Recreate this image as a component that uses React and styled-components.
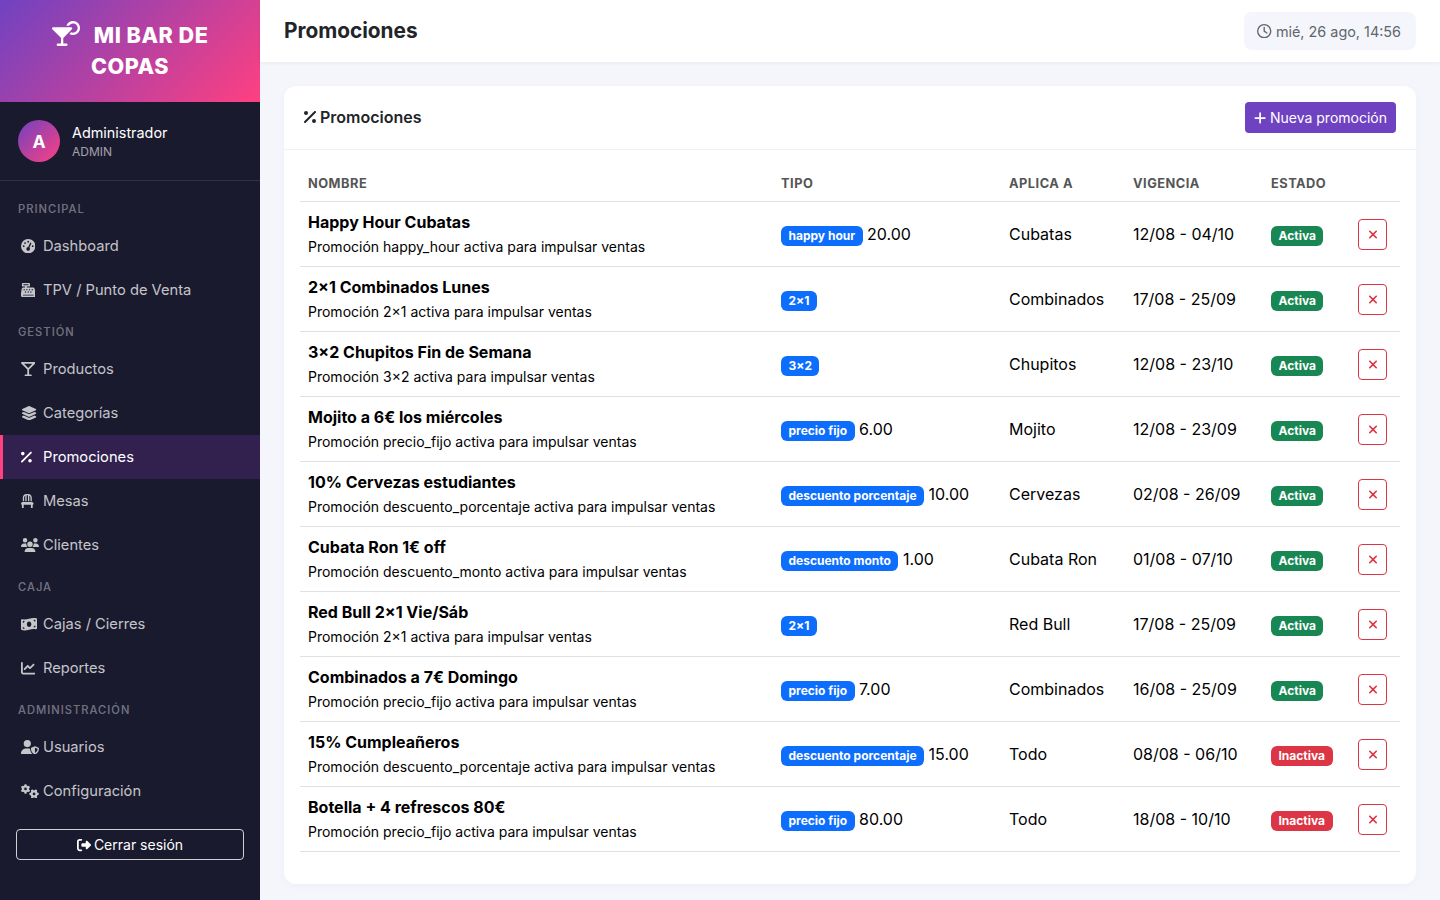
import styled, { createGlobalStyle } from 'styled-components'
import {
    FaMartiniGlassCitrus, FaGaugeHigh, FaCashRegister, FaMartiniGlassEmpty, FaLayerGroup, FaPercent, FaChair, FaUsers,
    FaMoneyBillWave, FaChartLine, FaUserShield, FaGears, FaRightFromBracket, FaRegClock, FaPlus, FaXmark
} from 'react-icons/fa6'

// ancho = proporción del viewBox del icono (ancho / 512)
const secciones = [
    { titulo: 'PRINCIPAL', items: [
        { nombre: 'Dashboard', Icono: FaGaugeHigh, ancho: 1 },
        { nombre: 'TPV / Punto de Venta', Icono: FaCashRegister, ancho: 1 },
    ] },
    { titulo: 'GESTIÓN', items: [
        { nombre: 'Productos', Icono: FaMartiniGlassEmpty, ancho: 1 },
        { nombre: 'Categorías', Icono: FaLayerGroup, ancho: 1.125 },
        { nombre: 'Promociones', Icono: FaPercent, ancho: 0.75, activo: true },
        { nombre: 'Mesas', Icono: FaChair, ancho: 0.875 },
        { nombre: 'Clientes', Icono: FaUsers, ancho: 1.25 },
    ] },
    { titulo: 'CAJA', items: [
        { nombre: 'Cajas / Cierres', Icono: FaMoneyBillWave, ancho: 1.125 },
        { nombre: 'Reportes', Icono: FaChartLine, ancho: 1 },
    ] },
    { titulo: 'ADMINISTRACIÓN', items: [
        { nombre: 'Usuarios', Icono: FaUserShield, ancho: 1.25 },
        { nombre: 'Configuración', Icono: FaGears, ancho: 1.25 },
    ] },
]

const promociones = [
    { nombre: 'Happy Hour Cubatas', desc: 'happy_hour', tipo: 'happy hour', valor: '20.00', aplica: 'Cubatas', vigencia: '12/08 - 04/10', activa: true },
    { nombre: '2×1 Combinados Lunes', desc: '2×1', tipo: '2×1', aplica: 'Combinados', vigencia: '17/08 - 25/09', activa: true },
    { nombre: '3×2 Chupitos Fin de Semana', desc: '3×2', tipo: '3×2', aplica: 'Chupitos', vigencia: '12/08 - 23/10', activa: true },
    { nombre: 'Mojito a 6€ los miércoles', desc: 'precio_fijo', tipo: 'precio fijo', valor: '6.00', aplica: 'Mojito', vigencia: '12/08 - 23/09', activa: true },
    { nombre: '10% Cervezas estudiantes', desc: 'descuento_porcentaje', tipo: 'descuento porcentaje', valor: '10.00', aplica: 'Cervezas', vigencia: '02/08 - 26/09', activa: true },
    { nombre: 'Cubata Ron 1€ off', desc: 'descuento_monto', tipo: 'descuento monto', valor: '1.00', aplica: 'Cubata Ron', vigencia: '01/08 - 07/10', activa: true },
    { nombre: 'Red Bull 2×1 Vie/Sáb', desc: '2×1', tipo: '2×1', aplica: 'Red Bull', vigencia: '17/08 - 25/09', activa: true },
    { nombre: 'Combinados a 7€ Domingo', desc: 'precio_fijo', tipo: 'precio fijo', valor: '7.00', aplica: 'Combinados', vigencia: '16/08 - 25/09', activa: true },
    { nombre: '15% Cumpleañeros', desc: 'descuento_porcentaje', tipo: 'descuento porcentaje', valor: '15.00', aplica: 'Todo', vigencia: '08/08 - 06/10', activa: false },
    { nombre: 'Botella + 4 refrescos 80€', desc: 'precio_fijo', tipo: 'precio fijo', valor: '80.00', aplica: 'Todo', vigencia: '18/08 - 10/10', activa: false },
]

export default function App() {
    return (
        <Pagina>
            <GlobalStyle />
            <Sidebar>
                <Marca>
                    <MarcaTitulo><FaMartiniGlassCitrus /> MI BAR DE COPAS</MarcaTitulo>
                </Marca>
                <Usuario>
                    <Avatar>A</Avatar>
                    <div>
                        <UsuarioNombre>Administrador</UsuarioNombre>
                        <UsuarioRol>ADMIN</UsuarioRol>
                    </div>
                </Usuario>
                <Nav>
                    {secciones.map((s) => (
                        <div key={s.titulo}>
                            <SeccionTitulo>{s.titulo}</SeccionTitulo>
                            {s.items.map(({ nombre, Icono, ancho, activo }) => (
                                <NavItem key={nombre} $activo={activo}>
                                    <NavIcono $ancho={ancho}><Icono /></NavIcono>
                                    {nombre}
                                </NavItem>
                            ))}
                        </div>
                    ))}
                </Nav>
                <CerrarSesion><FaRightFromBracket /> Cerrar sesión</CerrarSesion>
            </Sidebar>
            <Main>
                <Topbar>
                    <TituloPagina>Promociones</TituloPagina>
                    <Fecha><FaRegClock /> mié, 26 ago, 14:56</Fecha>
                </Topbar>
                <Contenido>
                    <Card>
                        <CardHeader>
                            <CardTitulo><FaPercent /> Promociones</CardTitulo>
                            <BotonNueva><FaPlus /> Nueva promoción</BotonNueva>
                        </CardHeader>
                        <CardBody>
                            <Tabla>
                                <thead>
                                    <tr>
                                        <Th $ancho={473}>Nombre</Th>
                                        <Th $ancho={228}>Tipo</Th>
                                        <Th $ancho={124}>Aplica a</Th>
                                        <Th $ancho={138}>Vigencia</Th>
                                        <Th $ancho={87}>Estado</Th>
                                        <Th $ancho={50}></Th>
                                    </tr>
                                </thead>
                                <tbody>
                                    {promociones.map((p) => (
                                        <tr key={p.nombre}>
                                            <Td>
                                                <PromoNombre>{p.nombre}</PromoNombre>
                                                <PromoDesc>Promoción {p.desc} activa para impulsar ventas</PromoDesc>
                                            </Td>
                                            <TdBajo><BadgeTipo>{p.tipo}</BadgeTipo>{p.valor && ` ${p.valor}`}</TdBajo>
                                            <Td>{p.aplica}</Td>
                                            <Td>{p.vigencia}</Td>
                                            <TdBajo><BadgeEstado $activa={p.activa}>{p.activa ? 'Activa' : 'Inactiva'}</BadgeEstado></TdBajo>
                                            <TdBajo><BotonBorrar><FaXmark /></BotonBorrar></TdBajo>
                                        </tr>
                                    ))}
                                </tbody>
                            </Tabla>
                        </CardBody>
                    </Card>
                </Contenido>
            </Main>
        </Pagina>
    )
}

const GlobalStyle = createGlobalStyle`
    * { box-sizing: border-box; }
    body {
        margin: 0;
        font-family: Inter, "Liberation Sans", sans-serif;
        color: #000;
        background: #f4f6fb;
    }
`;

const Pagina = styled.div`
    display: flex;
    height: 900px;
    overflow: hidden;
`;

const Sidebar = styled.aside`
    width: 260px;
    flex-shrink: 0;
    background: #1a1a2e;
    display: flex;
    flex-direction: column;
`;

const Marca = styled.div`
    height: 102px;
    padding: 20px;
    background: linear-gradient(135deg, #6f42c1, #ff4081);
    text-align: center;
`;

const MarcaTitulo = styled.div`
    color: #fff;
    font-size: 21.6px;
    font-weight: 800;
    line-height: 31px;
    letter-spacing: 0.5px;
    svg { width: 28px; height: 25px; vertical-align: -3px; margin-right: 9px; }
`;

const Usuario = styled.div`
    height: 79px;
    display: flex;
    align-items: center;
    gap: 12px;
    padding: 0 18px;
    border-bottom: 1px solid rgba(255, 255, 255, 0.1);
`;

const Avatar = styled.div`
    width: 42px;
    height: 42px;
    border-radius: 50%;
    background: linear-gradient(135deg, #6f42c1, #ff4081);
    display: flex;
    align-items: center;
    justify-content: center;
    color: #fff;
    font-size: 17.6px;
    font-weight: 700;
`;

const UsuarioNombre = styled.div`
    padding-top: 1px;
    color: #fff;
    font-size: 14.4px;
    font-weight: 400;
    line-height: 20px;
`;

const UsuarioRol = styled.div`
    color: rgba(255, 255, 255, 0.6);
    font-size: 12px;
    line-height: 18px;
`;

const Nav = styled.nav`
    padding-top: 8px;
`;

const SeccionTitulo = styled.div`
    padding: 11px 18px 6px;
    color: rgba(255, 255, 255, 0.4);
    font-size: 11.2px;
    font-weight: 500;
    line-height: 18px;
    letter-spacing: 1px;
`;

const NavItem = styled.div`
    height: 44px;
    display: flex;
    align-items: center;
    padding-left: ${({ $activo }) => $activo ? '18px' : '21px'};
    font-size: 14.7px;
    color: ${({ $activo }) => $activo ? '#fff' : 'rgba(255, 255, 255, 0.75)'};
    background: ${({ $activo }) => $activo ? '#32214f' : 'transparent'};
    border-left: ${({ $activo }) => $activo ? '3px solid #ff4081' : 'none'};
`;

const NavIcono = styled.span`
    width: 22px;
    display: flex;
    font-size: 14.4px;
    svg { width: ${({ $ancho }) => $ancho}em; height: 1em; }
`;

const CerrarSesion = styled.button`
    margin: 16px 16px 0;
    height: 31px;
    background: transparent;
    border: 1px solid rgba(255, 255, 255, 0.8);
    border-radius: 4px;
    color: #fff;
    font-family: inherit;
    font-size: 14px;
    display: flex;
    align-items: center;
    justify-content: center;
    gap: 3px;
`;

const Main = styled.main`
    flex: 1;
    min-width: 0;
    display: flex;
    flex-direction: column;
`;

const Topbar = styled.header`
    height: 62px;
    flex-shrink: 0;
    padding: 0 24px;
    background: #fff;
    display: flex;
    align-items: center;
    justify-content: space-between;
    box-shadow: 0 1px 4px rgba(0, 0, 0, 0.05);
`;

const TituloPagina = styled.h1`
    margin: 0 0 2px;
    font-size: 20.8px;
    font-weight: 700;
    color: #212529;
`;

const Fecha = styled.div`
    height: 38px;
    padding: 0 15px 0 13px;
    background: #f4f6fb;
    border-radius: 8px;
    display: flex;
    align-items: center;
    gap: 4px;
    color: #5f666d;
    font-size: 14.4px;
`;

const Contenido = styled.div`
    padding: 24px;
`;

const Card = styled.section`
    height: 798px;
    background: #fff;
    border-radius: 12px;
    box-shadow: 0 2px 8px rgba(0, 0, 0, 0.03);
`;

const CardHeader = styled.div`
    height: 64px;
    padding: 0 20px;
    display: flex;
    align-items: center;
    justify-content: space-between;
    border-bottom: 1px solid #eef0f3;
`;

const CardTitulo = styled.div`
    display: flex;
    align-items: center;
    gap: 4px;
    margin-bottom: 2px;
    font-size: 16px;
    font-weight: 600;
    color: #212529;
    svg { width: 12px; height: 16px; }
`;

const BotonNueva = styled.button`
    height: 31px;
    padding: 0 9px;
    background: #6f42c1;
    border: none;
    border-radius: 4px;
    color: #fff;
    font-family: inherit;
    font-size: 14px;
    display: flex;
    align-items: center;
    gap: 4px;
    svg { width: 12.25px; height: 14px; }
`;

const CardBody = styled.div`
    padding: 16px;
`;

const Tabla = styled.table`
    width: 1100px;
    table-layout: fixed;
    border-collapse: collapse;
`;

const Th = styled.th`
    width: ${({ $ancho }) => $ancho}px;
    height: 35px;
    padding: 0 8px;
    text-align: left;
    font-size: 12.8px;
    font-weight: 700;
    letter-spacing: 0.5px;
    text-transform: uppercase;
    color: #555;
    border-bottom: 1px solid #dee2e6;
`;

const Td = styled.td`
    height: 65px;
    padding: 0 8px;
    font-size: 16px;
    color: #000;
    vertical-align: middle;
    border-bottom: 1px solid #dee2e6;
    white-space: nowrap;
`;

const TdBajo = styled(Td)`
    padding-top: 2px;
`;

const PromoNombre = styled.div`
    font-weight: 700;
    line-height: 24px;
`;

const PromoDesc = styled.div`
    font-size: 14px;
    line-height: 21px;
    margin-top: 2px;
`;

const Badge = styled.span`
    display: inline-block;
    padding: 4px 7.5px;
    border-radius: 6px;
    color: #fff;
    font-size: 12px;
    font-weight: 700;
    line-height: 12px;
    vertical-align: baseline;
`;

const BadgeTipo = styled(Badge)`
    background: #0d6efd;
`;

const BadgeEstado = styled(Badge)`
    background: ${({ $activa }) => $activa ? '#198754' : '#dc3545'};
`;

const BotonBorrar = styled.button`
    width: 29px;
    height: 31px;
    padding: 0;
    background: #fff;
    border: 1px solid #dc3545;
    border-radius: 4px;
    color: #dc3545;
    display: flex;
    align-items: center;
    justify-content: center;
    svg { width: 10px; height: 13px; }
`;
